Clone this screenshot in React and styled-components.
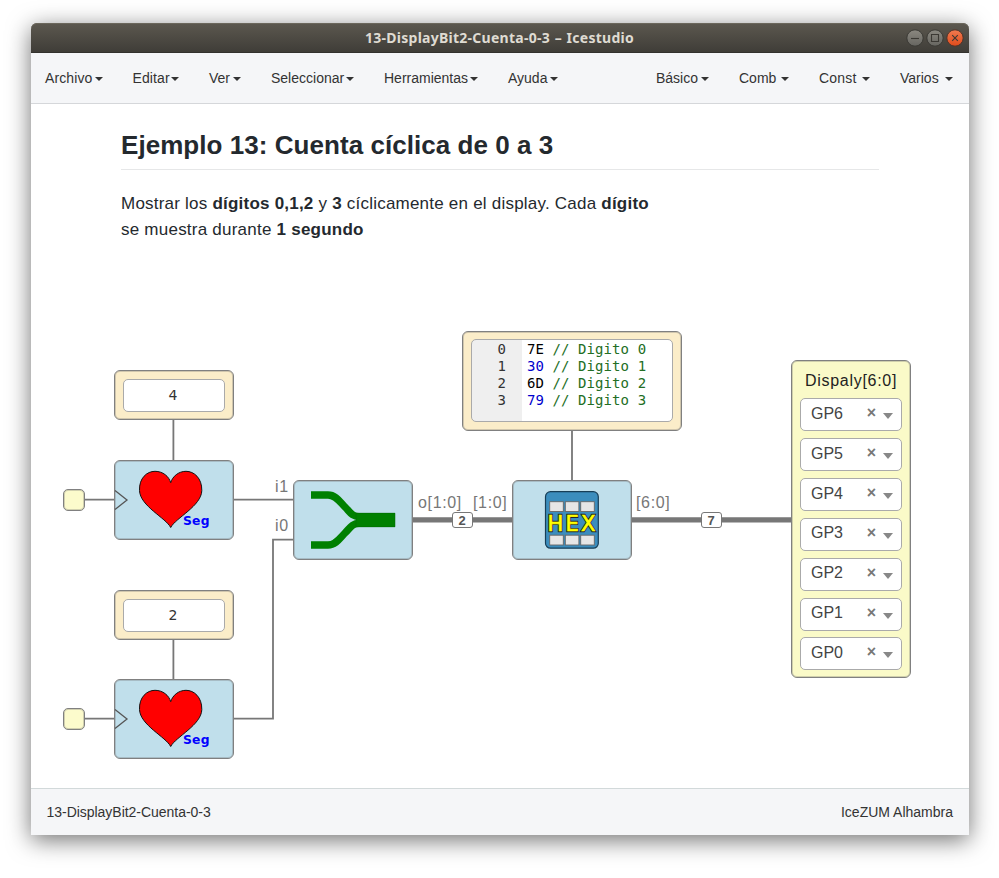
import React from 'react';
import styled, { createGlobalStyle } from 'styled-components';

const GlobalStyle = createGlobalStyle`
  * { box-sizing: border-box; }
  body { margin: 0; background: #fff; overflow: hidden; }
`;

const Desktop = styled.div`
  width: 999px;
  height: 878px;
  padding: 23px 30px 43px 31px;
  background: #fff;
  font-family: 'Liberation Sans', Arial, sans-serif;
  color: #333;
`;

const Window = styled.div`
  height: 812px;
  display: flex;
  flex-direction: column;
  border-radius: 6px 6px 0 0;
  background: #fff;
  box-shadow: 0 5px 23px rgba(0, 0, 0, 0.56);
`;

const TitleBar = styled.header`
  height: 30px;
  flex: none;
  display: grid;
  grid-template-columns: 1fr auto 1fr;
  align-items: center;
  padding-right: 5px;
  border-radius: 6px 6px 0 0;
  background: linear-gradient(#5c584f, #3e3c37);
  box-shadow: inset 0 1px #6b675c, inset 0 -1px #33322e;
`;

const Title = styled.h1`
  grid-column: 2;
  margin: 0;
  padding-left: 4px;
  font: bold 14px/30px 'Noto Sans', sans-serif;
  letter-spacing: 0.26px;
  word-spacing: 0.8px;
  color: #dfdbd2;
`;

const WindowButtons = styled.div`
  display: flex;
  gap: 2px;
  justify-content: flex-end;
`;

const WindowButton = styled.svg`
  width: 18px;
  height: 18px;
  display: block;
`;

const NavBar = styled.nav`
  height: 51px;
  flex: none;
  display: flex;
  justify-content: space-between;
  padding: 0 16px 0 14px;
  background: #f5f6f8;
  border-bottom: 1px solid #d5d7da;
`;

const Menu = styled.div`
  display: flex;
  gap: 30px;
`;

const MenuItem = styled.div`
  width: ${(p) => p.$width}px;
  display: flex;
  align-items: center;
  justify-content: space-between;
  font-size: 14px;
  letter-spacing: ${(p) => p.$track}px;
  white-space: nowrap;
  color: #333;

  &::after {
    content: '';
    flex: none;
    border: 4px solid transparent;
    border-top-color: #333;
    border-bottom: 0;
    margin-top: 2px;
  }
`;

const Canvas = styled.main`
  flex: 1;
  position: relative;
  padding: 24px 90px 0;
`;

const Heading = styled.h2`
  margin: 0 0 21px;
  height: 42px;
  font-size: 26px;
  line-height: 34px;
  letter-spacing: ${(p) => p.$track}px;
  border-bottom: 1px solid #e6e7e8;
  color: #24292e;
`;

const Line = styled.p`
  margin: 0;
  font-size: 17px;
  line-height: 26px;
  letter-spacing: ${(p) => p.$track}px;
  white-space: nowrap;
  color: #24292e;
`;

const Wires = styled.svg`
  position: absolute;
  inset: 0;
  width: 938px;
  height: 684px;
  fill: none;
  stroke: #777;
`;

const Node = styled.div`
  position: absolute;
  left: ${(p) => p.$x}px;
  top: ${(p) => p.$y}px;
`;

const Shell = styled.div`
  border: 1px solid #808080;
  border-radius: 6px;
  box-shadow: inset 0 0 0 1px rgba(110, 110, 110, 0.3);
`;

const InputPin = styled(Shell)`
  width: 22px;
  height: 22px;
  border-radius: 5px;
  background: #fcfbcc;
`;

const ConstantBlock = styled(Shell)`
  width: 120px;
  height: 50px;
  padding: 8px;
  background: #fbedc9;
`;

const Field = styled.div`
  height: 33px;
  border: 1px solid #aaa;
  border-radius: 5px;
  background: #fff;
`;

const ConstantField = styled(Field)`
  display: flex;
  align-items: center;
  justify-content: center;
  font: 14px 'DejaVu Sans', sans-serif;
  padding: 0 2px 1px 0;
  color: #333;
`;

const CodeBlock = styled(Shell)`
  width: 220px;
  height: 100px;
  padding: 7px 8px;
  background: #fbedc9;
`;

const Editor = styled(Field)`
  height: 83px;
  padding-top: 1px;
  overflow: hidden;
  background: linear-gradient(to right, #efefef 50px, #fff 50px);
`;

const CodeLine = styled.div`
  display: grid;
  grid-template-columns: 34px auto;
  column-gap: 21px;
  font: 14px/17px 'DejaVu Sans Mono', monospace;
  letter-spacing: 0.08px;
  white-space: pre;
  color: #236e24;
`;

const LineNumber = styled.span`
  text-align: right;
  color: #333;
`;

const CodeValue = styled.span`
  color: ${(p) => (p.$numeric ? '#0000cd' : '#000')};
`;

const LogicBlock = styled(Shell)`
  width: 120px;
  height: 80px;
  background: #c0dfeb;

  svg {
    display: block;
    margin: -1px;
  }
`;

const PortLabel = styled.span`
  font-size: 16px;
  line-height: 18px;
  letter-spacing: 0.65px;
  color: #777;
`;

const BusSize = styled.span`
  display: block;
  width: 21px;
  height: 16px;
  border: 1px solid #777;
  border-radius: 3px;
  background: #fff;
  font: bold 13px/15px 'Liberation Sans', sans-serif;
  text-align: center;
  padding-right: 1px;
  color: #555;
`;

const OutputBlock = styled(Shell)`
  width: 120px;
  height: 318px;
  padding: 10px 8px 0;
  display: flex;
  flex-direction: column;
  gap: 6.85px;
  background: #fafac8;
`;

const OutputTitle = styled.div`
  height: 21px;
  margin-bottom: -0.5px;
  font-size: 16px;
  line-height: 20px;
  letter-spacing: 0.72px;
  text-align: center;
  white-space: nowrap;
  color: #222;
`;

const Select = styled(Field)`
  flex: none;
  display: flex;
  align-items: center;
  padding: 0 8px 2px 10px;
  font-size: 16px;
  color: #444;
`;

const Clear = styled.span`
  margin: -1px 0 0 auto;
  font: bold 16px/14px 'Liberation Sans', sans-serif;
  color: #777;
`;

const Arrow = styled.span`
  margin: 5px 0 0 7px;
  border: 5px solid transparent;
  border-top: 6px solid #888;
  border-bottom: 0;
`;

const Footer = styled.footer`
  height: 47px;
  flex: none;
  display: flex;
  align-items: center;
  justify-content: space-between;
  padding: 0 16px 0 15.5px;
  border-top: 1px solid #d2d9da;
  background: #f5f6f8;
  font-size: 14px;
`;

const FooterText = styled.span`
  letter-spacing: ${(p) => p.$track}px;
`;

const leftMenu = [
  ['Archivo', 57.5, 0.1],
  ['Editar', 46.5, 0.1],
  ['Ver', 32, -0.1],
  ['Seleccionar', 83, 0],
  ['Herramientas', 94, 0],
  ['Ayuda', 50, 0],
];
const rightMenu = [
  ['Básico', 53, 0],
  ['Comb', 50, 0],
  ['Const', 51, 0.2],
  ['Varios', 53, 0],
];
const program = ['7E', '30', '6D', '79'];
const pins = ['GP6', 'GP5', 'GP4', 'GP3', 'GP2', 'GP1', 'GP0'];
const labels = [
  ['i1', 244, 374],
  ['i0', 244, 413],
  ['o[1:0]', 387, 390],
  ['[1:0]', 442, 390],
  ['[6:0]', 605, 390],
];

function WindowControl({ top, bottom, rim, children }) {
  const id = 'control-' + top.slice(1);
  return (
    <WindowButton viewBox="0 0 18 18">
      <defs>
        <linearGradient id={id} x2="0" y2="1">
          <stop stopColor={top} />
          <stop offset="1" stopColor={bottom} />
        </linearGradient>
      </defs>
      <circle cx="9" cy="9" r="8.2" fill={`url(#${id})`} stroke={rim} />
      <g fill="none" stroke="#3b3934" strokeWidth="1.1">{children}</g>
    </WindowButton>
  );
}

function HeartBlock() {
  return (
    <LogicBlock>
      <svg width="120" height="80">
        <path d="M1 30.5 13 40 1 49.5" fill="none" stroke="#555" strokeWidth="1.3" />
        <path
          d="M56.7 67.5C52 58 26 46 25.5 30.5C25 18 33 11.3 41 11.3C49 11.3 55 16.5 56.7 22.7C58.5 16.5 64.5 11.3 72 11.3C80 11.3 88 18 87.8 30.5C87.5 46 61.5 58 56.7 67.5Z"
          fill="#f00"
          stroke="#111"
        />
        <text x="69" y="65" fill="#00f" fontFamily="DejaVu Sans" fontSize="12.3" fontWeight="bold" textLength="26.5">Seg</text>
      </svg>
    </LogicBlock>
  );
}

function JoinBlock() {
  return (
    <LogicBlock>
      <svg width="120" height="80">
        <g fill="none" stroke="#008000" strokeWidth="7.3">
          <path d="M18 15H35C43 15 47 22 52 27C57 32 59 36.6 66 36.6H102" />
          <path d="M18 65H35C43 65 47 58 52 53C57 48 59 43.4 66 43.4H102" />
        </g>
        <path d="M63 33.2H102V46.8H63Z" fill="#008000" stroke="#006800" strokeWidth=".5" />
      </svg>
    </LogicBlock>
  );
}

function HexBlock() {
  const text = { x: 35.5, y: 50.5, fontFamily: 'DejaVu Sans', fontSize: 21, textLength: 48 };
  return (
    <LogicBlock>
      <svg width="120" height="80">
        <rect x="33.5" y="11.7" width="52.8" height="56.5" rx="5" fill="#3b8dbd" stroke="#173e57" strokeWidth="1.2" />
        {[21.7, 55.2].map((y) =>
          [37.7, 53.3, 68.7].map((x) => (
            <rect key={x + y} x={x} y={y} width="13.6" height="9.8" fill="#e6e6e6" stroke="#666" strokeWidth=".9" />
          ))
        )}
        <text {...text} fill="#222" stroke="#222" strokeWidth="2.4">HEX</text>
        <text {...text} fill="#ff0" stroke="#ff0" strokeWidth=".7">HEX</text>
      </svg>
    </LogicBlock>
  );
}

export default function App() {
  return (
    <Desktop>
      <GlobalStyle />
      <Window>
        <TitleBar>
          <Title>13-DisplayBit2-Cuenta-0-3 – Icestudio</Title>
          <WindowButtons>
            <WindowControl top="#8b8880" bottom="#666560" rim="#3a3934"><path d="M5 9.5h8" /></WindowControl>
            <WindowControl top="#8a8880" bottom="#666560" rim="#3a3934"><path d="M5.5 5.5h7v7h-7z" /></WindowControl>
            <WindowControl top="#f07a50" bottom="#df4b1b" rim="#4e332a"><path d="m6.2 6.2 5.6 5.6m0-5.6-5.6 5.6" /></WindowControl>
          </WindowButtons>
        </TitleBar>
        <NavBar>
          {[leftMenu, rightMenu].map((menu) => (
            <Menu key={menu[0][0]}>
              {menu.map(([name, width, track]) => (
                <MenuItem key={name} $width={width} $track={track}>{name}</MenuItem>
              ))}
            </Menu>
          ))}
        </NavBar>
        <Canvas>
          <Heading $track={0.05}>Ejemplo 13: Cuenta cíclica de 0 a 3</Heading>
          <Line $track={0.22}>
            Mostrar los <b>dígitos 0,1,2</b> y <b>3</b> cíclicamente en el display. Cada <b>dígito</b>
          </Line>
          <Line $track={0.23}>
            se muestra durante <b>1 segundo</b>
          </Line>
          <Wires>
            <g strokeWidth="1.8">
              <path d="M142.4 316V357M142.4 535V576M541 326V377" />
              <path d="M53 395.7H84M53 614.7H84M202 395.7H263M202 614.7H242V435.7H263" />
            </g>
            <path d="M381 415.8H482M600 415.8H761" strokeWidth="5.2" />
          </Wires>
          {labels.map(([name, x, y]) => (
            <Node key={name} $x={x} $y={y}><PortLabel>{name}</PortLabel></Node>
          ))}
          <Node $x={421} $y={408}><BusSize>2</BusSize></Node>
          <Node $x={670} $y={408}><BusSize>7</BusSize></Node>
          <Node $x={83} $y={266}><ConstantBlock><ConstantField>4</ConstantField></ConstantBlock></Node>
          <Node $x={83} $y={486}><ConstantBlock><ConstantField>2</ConstantField></ConstantBlock></Node>
          <Node $x={32} $y={385}><InputPin /></Node>
          <Node $x={32} $y={604}><InputPin /></Node>
          <Node $x={83} $y={356}><HeartBlock /></Node>
          <Node $x={83} $y={575}><HeartBlock /></Node>
          <Node $x={262} $y={376}><JoinBlock /></Node>
          <Node $x={481} $y={376}><HexBlock /></Node>
          <Node $x={431} $y={227}>
            <CodeBlock>
              <Editor>
                {program.map((value, i) => (
                  <CodeLine key={value}>
                    <LineNumber>{i}</LineNumber>
                    <span>
                      <CodeValue $numeric={/^\d+$/.test(value)}>{value}</CodeValue>
                      {` // Digito ${i}`}
                    </span>
                  </CodeLine>
                ))}
              </Editor>
            </CodeBlock>
          </Node>
          <Node $x={760} $y={256}>
            <OutputBlock>
              <OutputTitle>Dispaly[6:0]</OutputTitle>
              {pins.map((pin) => (
                <Select key={pin}>{pin}<Clear>×</Clear><Arrow /></Select>
              ))}
            </OutputBlock>
          </Node>
        </Canvas>
        <Footer>
          <FooterText $track={-0.03}>13-DisplayBit2-Cuenta-0-3</FooterText>
          <FooterText $track={0}>IceZUM Alhambra</FooterText>
        </Footer>
      </Window>
    </Desktop>
  );
}
